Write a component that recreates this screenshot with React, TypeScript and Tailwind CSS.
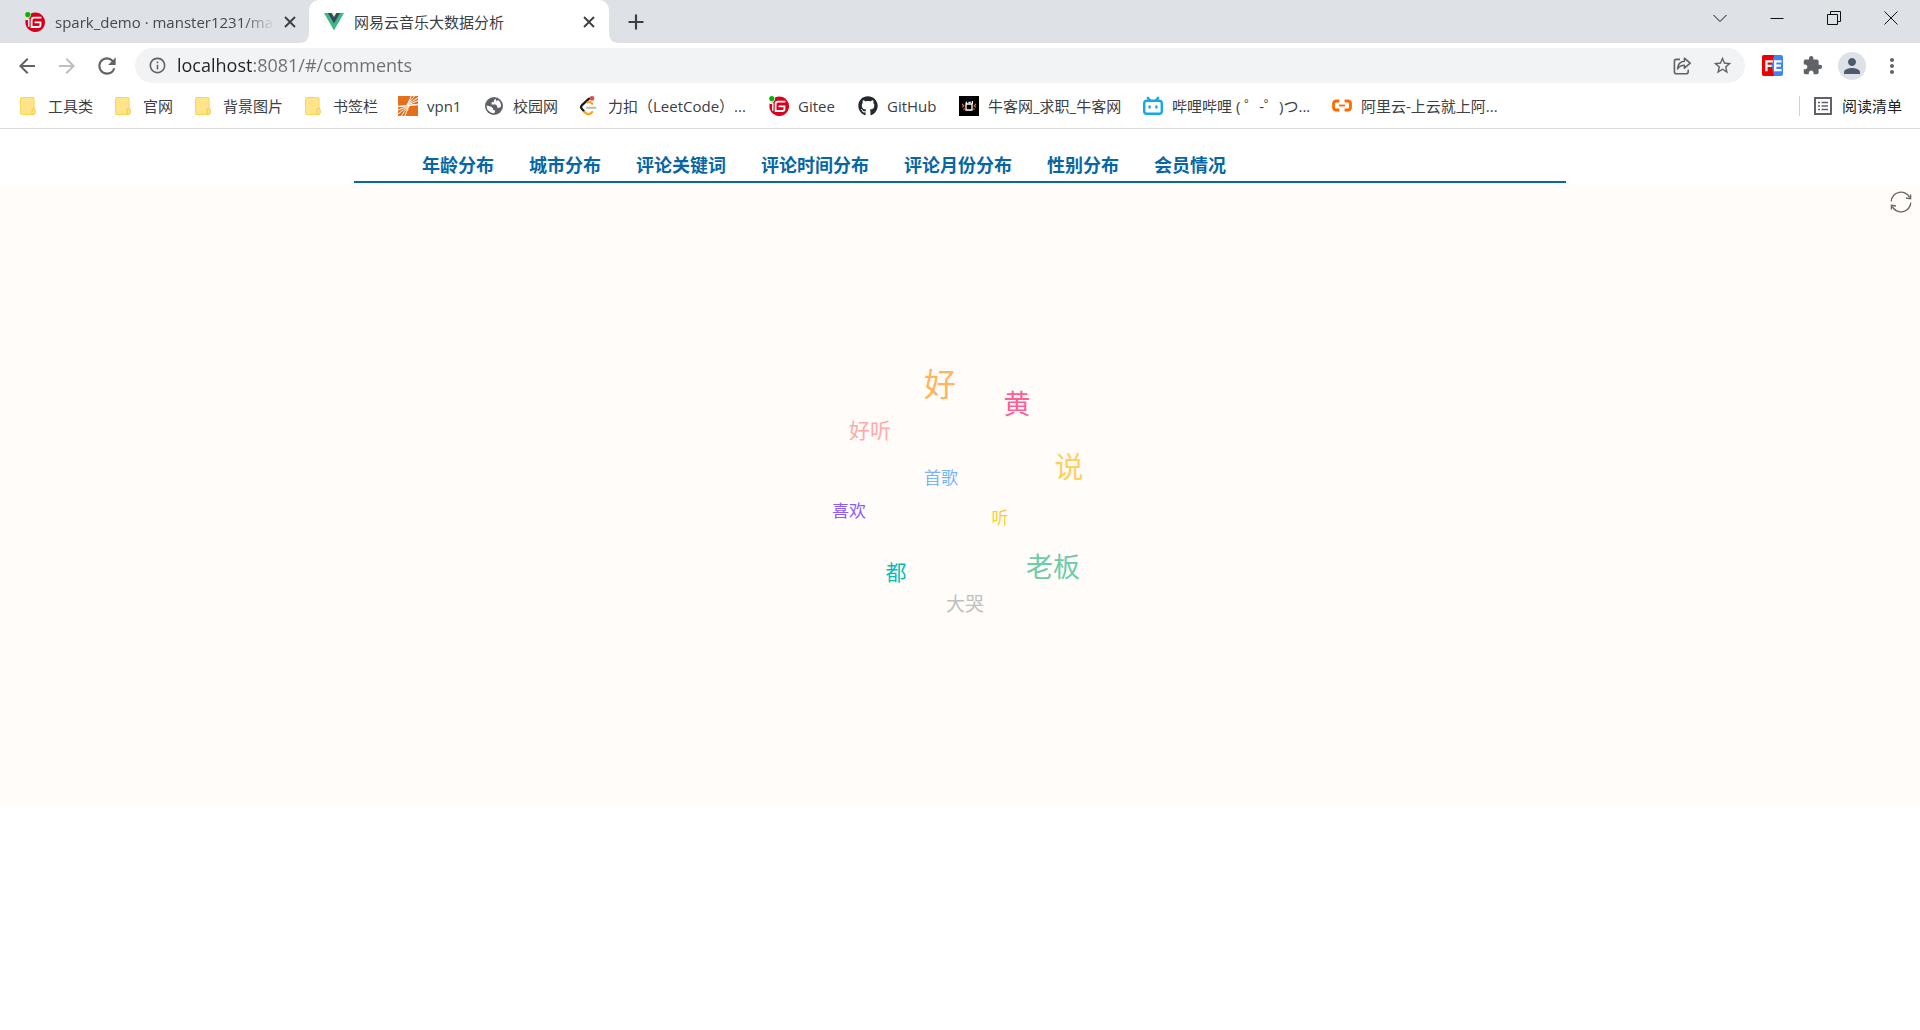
import type { ReactNode } from "react";
import {
  MdArrowBack,
  MdArrowForward,
  MdExtension,
  MdInfoOutline,
  MdMoreVert,
  MdPerson,
  MdRefresh,
  MdStarBorder,
} from "react-icons/md";
import { FaGithub } from "react-icons/fa";

function GiteeIcon() {
  return (
    <svg viewBox="0 0 20 20" className="size-5 shrink-0" aria-hidden="true">
      <path d="M10.2.4a9.8 9.8 0 1 1-9.3 6.7Q6.4 6.4 6.2 1.3A9.8 9.8 0 0 1 10.2.4z" fill="#d9001b" />
      <circle cx="2.8" cy="2.6" r="2.6" fill="#00b800" />
      <path
        d="M16.4 5.6H9Q6.6 5.6 6.6 8v7h6.6q2.3 0 2.3-2.3v-2.4H9.6"
        fill="none"
        stroke="#fff"
        strokeWidth="1.8"
      />
      <path d="M1 7.2h2.8v7.6" fill="none" stroke="#fff" strokeWidth="1.4" />
    </svg>
  );
}

function VueIcon() {
  return (
    <svg viewBox="0 0 20 18" className="h-[18px] w-5 shrink-0" aria-hidden="true">
      <path d="M0 0h20L10 17.4z" fill="#41b883" />
      <path d="M4 0h12l-6 10.4z" fill="#34495e" />
      <path d="M7.6 0h4.8L10 4z" fill="#dff3ea" />
    </svg>
  );
}

function FolderIcon() {
  return (
    <svg viewBox="0 0 20 20" className="size-5 shrink-0" aria-hidden="true">
      <rect x="1.5" y="1.5" width="13.6" height="17" rx="1" fill="#ffe48a" stroke="#fbd750" />
      <path d="M13 18.5v-4.6q0-1.6 1.6-1.6t1.6 1.6v3q0 1.6-1.6 1.6z" fill="#ffe48a" stroke="#ecc94a" />
    </svg>
  );
}

function VpnIcon() {
  return (
    <svg viewBox="0 0 20 20" className="size-5 shrink-0" aria-hidden="true">
      <path d="M0 0h20v20H0z" fill="#e5701c" />
      <g stroke="#fff" fill="none" strokeWidth="1">
        <path d="M0 10.6Q8 9.5 20 8.4" strokeWidth="1.5" />
        <path d="M8.6 8.8Q14 7.6 20 4.6M9 8Q14 6 20 1.6M9.6 7Q13.4 4.4 16.6 0M10.4 5.6Q12 3.6 13.2 0" />
        <path d="M0 14.2Q5 11.6 11.4 10.4M0 18Q5 13.4 11 11M3.4 20Q6 15 10.6 11.8M7 20Q8 16 10.2 13" />
      </g>
    </svg>
  );
}

function GlobeIcon() {
  return (
    <svg viewBox="0 0 20 20" className="size-5 shrink-0" aria-hidden="true">
      <circle cx="10" cy="10" r="9" fill="#5f6368" />
      <path
        d="M11.4 2.8 10 4.2v1.6L7.6 6.6v2h4.2l1.4 1.6v1.6h2.2l1.6-1.2A7.4 7.4 0 0 0 14 4l-1.2 1.4z"
        fill="#fff"
      />
      <path d="M2.6 9.4 6.8 10.6l2.2 1.6v1.6l2.2.6-.8 2.8A7.4 7.4 0 0 1 2.6 9.4z" fill="#fff" />
    </svg>
  );
}

function LeetcodeIcon() {
  return (
    <svg viewBox="0 0 20 20" className="size-5 shrink-0" aria-hidden="true">
      <path d="M10 2.6 2.8 9.4q-1.6 1.7 0 3.4l2.2 2.4" fill="none" stroke="#1a1a1a" strokeWidth="2.2" strokeLinecap="round" />
      <path d="M5.4 15.8 7 17.4q2.4 1.8 4.8 0l1.4-1.4M8.6 6.4q1.8-1.2 3.4.2l1.2 1.2" fill="none" stroke="#ffa116" strokeWidth="2.2" strokeLinecap="round" />
      <path d="M8 11.8h8.4" stroke="#b8b8b8" strokeWidth="2" strokeLinecap="round" />
      <circle cx="13" cy="2.4" r="2.3" fill="#e04a4a" />
    </svg>
  );
}

function NowcoderIcon() {
  return (
    <svg viewBox="0 0 20 20" className="size-5 shrink-0" aria-hidden="true">
      <path d="M0 0h20v20H0z" fill="#000" />
      <path d="M7 8h6v6H7zM7.4 5.8V8M13.4 5v3M9.4 6.4h2.4" fill="none" stroke="#fff" strokeWidth="1.3" />
      <path d="M3 8l2 2-2 1.4M4.2 13.6l2-1.2M17 8l-2 2 2 1.4M15.8 13.6l-2-1.2" fill="none" stroke="#e06a4a" strokeWidth="1.1" />
    </svg>
  );
}

function BilibiliIcon() {
  return (
    <svg viewBox="0 0 20 20" className="size-5 shrink-0" aria-hidden="true">
      <g fill="none" stroke="#13aae2" strokeWidth="2.4" strokeLinecap="round">
        <rect x="1.2" y="4.8" width="17.6" height="13" rx="2.6" />
        <path d="M4.8 1.8 7 4.4M15.2 1.8 13 4.4M6.6 10.4v1M13.4 10.4v1" />
      </g>
    </svg>
  );
}

function AliyunIcon() {
  return (
    <svg viewBox="0 0 20 20" className="size-5 shrink-0" aria-hidden="true">
      <g fill="none" stroke="#ff6a00">
        <path
          d="M7.4 5H4.4Q1.5 5 1.5 7.8v3.4Q1.5 14 4.4 14h3M12.6 5h3q2.9 0 2.9 2.8v3.4q0 2.8-2.9 2.8h-3"
          strokeWidth="2.8"
        />
        <path d="M7 9.5h6" strokeWidth="1.8" />
      </g>
    </svg>
  );
}

function ShareIcon() {
  return (
    <svg viewBox="0 0 20 20" className="size-5" fill="none" stroke="#5f6368" strokeWidth="1.6" strokeLinejoin="round" aria-hidden="true">
      <path d="M8 3.4H4.4Q2.4 3.4 2.4 5.4v10.4q0 2 2 2h9.8q2 0 2-2v-2" />
      <path d="M12.4 2.2 18.2 7.2 12.4 12.2V9.2Q8 9.2 5.6 12.8 6 5.6 12.4 5.2z" />
    </svg>
  );
}

function FeIcon() {
  return (
    <svg viewBox="0 0 20 20" className="size-[21px]" aria-hidden="true">
      <rect width="20" height="20" rx="2" fill="#3f86f4" />
      <path d="M2 0h9.6L9 10l2.6 10H2q-2 0-2-2V2q0-2 2-2z" fill="#ee0000" />
      <path d="M4.2 15.4V6h6M4.2 10.4h5M18.6 6h-6v8.4h6M12.6 10.2h5.4" fill="none" stroke="#fff" strokeWidth="2.2" />
    </svg>
  );
}

function ReadingListIcon() {
  return (
    <svg viewBox="0 0 18 18" className="size-[18px]" fill="none" stroke="#5f6368" aria-hidden="true">
      <path d="M1 1h16v16H1z" strokeWidth="2" />
      <path d="M4 5.5h2M7.5 5.5H14M4 9h2M7.5 9H14M4 12.5h2M7.5 12.5H14" strokeWidth="1.6" />
    </svg>
  );
}

function CloseIcon() {
  return (
    <svg viewBox="0 0 12 12" className="size-3" stroke="#3c4043" strokeWidth="1.9" aria-hidden="true">
      <path d="M1 1l10 10M11 1 1 11" />
    </svg>
  );
}

function ReloadChartIcon() {
  return (
    <svg viewBox="0 0 22 22" className="size-[22px]" fill="none" stroke="#666" strokeWidth="1.3" aria-hidden="true">
      <path d="M1.2 10.4A9.8 9.8 0 0 1 19.8 6.6M20.8 11.6A9.8 9.8 0 0 1 2.2 15.4" />
      <path d="M20.6 3.4v4.4L16 7M1.4 18.6v-4.4L6 15" />
    </svg>
  );
}

const bookmarks: { label: string; icon: ReactNode; width: string }[] = [
  { label: "工具类", icon: <FolderIcon />, width: "w-[73px]" },
  { label: "官网", icon: <FolderIcon />, width: "w-[58px]" },
  { label: "背景图片", icon: <FolderIcon />, width: "w-[88px]" },
  { label: "书签栏", icon: <FolderIcon />, width: "w-[72px]" },
  { label: "vpn1", icon: <VpnIcon />, width: "w-[64px]" },
  { label: "校园网", icon: <GlobeIcon />, width: "w-[73px]" },
  { label: "力扣（LeetCode）...", icon: <LeetcodeIcon />, width: "w-[168px]" },
  { label: "Gitee", icon: <GiteeIcon />, width: "w-[67px]" },
  { label: "GitHub", icon: <FaGithub className="size-5 shrink-0 text-[#24292f]" />, width: "w-[79px]" },
  { label: "牛客网_求职_牛客网", icon: <NowcoderIcon />, width: "w-[162px]" },
  { label: "哔哩哔哩 ( ゜-゜)つ...", icon: <BilibiliIcon />, width: "w-[167px]" },
  { label: "阿里云-上云就上阿...", icon: <AliyunIcon />, width: "w-[170px]" },
];

const sections = [
  "年龄分布",
  "城市分布",
  "评论关键词",
  "评论时间分布",
  "评论月份分布",
  "性别分布",
  "会员情况",
];

// Each word is anchored by its centre on the cloud's canvas.
const words = [
  { text: "好", place: "left-[120px] top-[34px] text-[32px] text-[#ffb55f]" },
  { text: "黄", place: "left-[197px] top-[53px] text-[27px] text-[#ff5f91]" },
  { text: "好听", place: "left-[50px] top-[80px] text-[21px] text-[#ffaaaa]" },
  { text: "说", place: "left-[249px] top-[116px] text-[29px] text-[#ffd05a]" },
  { text: "首歌", place: "left-[121px] top-[127px] text-[17px] text-[#78b4ff]" },
  { text: "喜欢", place: "left-[29px] top-[160px] text-[17px] text-[#8b5cff]" },
  { text: "听", place: "left-[180px] top-[167px] text-[17px] text-[#f7d038]" },
  { text: "都", place: "left-[76px] top-[222px] text-[21px] text-[#07bdb4]" },
  { text: "老板", place: "left-[233px] top-[216px] text-[27px] text-[#6ecba8]" },
  { text: "大哭", place: "left-[145px] top-[254px] text-[19px] text-[#bfbfbf]" },
];

function ToolButton({ label, children }: { label: string; children: ReactNode }) {
  return (
    <button type="button" aria-label={label} className="flex h-9 w-10 shrink-0 items-center justify-center text-[#5f6368]">
      {children}
    </button>
  );
}

function WindowButton({ label, d }: { label: string; d: string }) {
  return (
    <button type="button" aria-label={label} className="flex h-9 w-[57px] items-center justify-center">
      <svg viewBox="0 0 14 14" className="size-3.5" fill="none" stroke="#111" aria-hidden="true">
        <path d={d} />
      </svg>
    </button>
  );
}

function TabStrip() {
  return (
    <header className="flex h-[43px] bg-[#dee1e6]">
      <div className="flex w-[309px] items-center pr-[13px] pl-[25px]">
        <GiteeIcon />
        <a
          href="#/gitee"
          className="ml-2.5 w-[220px] overflow-hidden mask-r-from-85% pt-0.5 text-[15px] whitespace-nowrap text-[#45494d]"
        >
          spark_demo · manster1231/manster
        </a>
        <button type="button" aria-label="关闭标签页" className="ml-[9px] shrink-0">
          <CloseIcon />
        </button>
      </div>
      <div className="relative flex w-[300px] items-center rounded-t-[10px] bg-white pr-[14px] pl-[15px]">
        <svg viewBox="0 0 10 10" className="absolute bottom-0 -left-2.5 size-2.5 fill-white" aria-hidden="true">
          <path d="M10 0v10H0Q10 10 10 0z" />
        </svg>
        <svg viewBox="0 0 10 10" className="absolute -right-2.5 bottom-0 size-2.5 fill-white" aria-hidden="true">
          <path d="M0 0v10h10Q0 10 0 0z" />
        </svg>
        <VueIcon />
        <a href="#/comments" className="ml-2.5 grow pt-0.5 text-[15px] text-[#3c4043]">
          网易云音乐大数据分析
        </a>
        <button type="button" aria-label="关闭标签页">
          <CloseIcon />
        </button>
      </div>
      <button type="button" aria-label="新标签页" className="ml-[7px] flex w-10 items-center justify-center">
        <svg viewBox="0 0 16 16" className="size-4" stroke="#3c4043" strokeWidth="2.2" aria-hidden="true">
          <path d="M8 .5v15M.5 8h15" />
        </svg>
      </button>
      <div className="mr-px ml-auto flex">
        <WindowButton label="搜索标签页" d="M.5 4 7 10.5 13.5 4" />
        <WindowButton label="最小化" d="M.5 7.5h13" />
        <WindowButton label="还原" d="M.5 3.5h10v10H.5zM3.5 3.5v-3h10v10h-3" />
        <WindowButton label="关闭" d="M.5.5l13 13M13.5.5l-13 13" />
      </div>
    </header>
  );
}

function Toolbar() {
  return (
    <div className="flex h-[45px] items-center pr-2 pl-[7px]">
      <ToolButton label="返回">
        <MdArrowBack className="size-6" />
      </ToolButton>
      <ToolButton label="前进">
        <MdArrowForward className="size-6 text-[#bcbec0]" />
      </ToolButton>
      <ToolButton label="重新加载">
        <MdRefresh className="size-[26px]" />
      </ToolButton>
      <div className="mr-[7px] ml-2 flex h-[35px] grow items-center rounded-full bg-[#f1f3f4] pr-[3px] pl-[13px]">
        <MdInfoOutline className="size-[19px] shrink-0 text-[#5f6368]" />
        <input
          type="text"
          aria-label="地址"
          defaultValue="localhost:8081/#/comments"
          className="ml-2.5 min-w-0 grow bg-[linear-gradient(to_right,#202124_76px,#6b6f73_76px)] bg-clip-text text-[18px] text-transparent outline-none"
        />
        <ToolButton label="分享">
          <ShareIcon />
        </ToolButton>
        <ToolButton label="收藏">
          <MdStarBorder className="size-[21px]" />
        </ToolButton>
      </div>
      <ToolButton label="FE 助手">
        <FeIcon />
      </ToolButton>
      <ToolButton label="扩展程序">
        <MdExtension className="size-[21px]" />
      </ToolButton>
      <ToolButton label="用户">
        <span className="flex size-7 items-center justify-center rounded-full bg-[#dee1e6]">
          <MdPerson className="size-6 text-[#4e5a6e]" />
        </span>
      </ToolButton>
      <ToolButton label="菜单">
        <MdMoreVert className="size-6" />
      </ToolButton>
    </div>
  );
}

function BookmarksBar() {
  return (
    <nav
      aria-label="书签"
      className="flex h-[41px] items-center border-b border-[#dadce0] pr-[18px] pb-1 pl-[19px] text-[15px] text-[#3c4043]"
    >
      <div className="flex gap-[22px] overflow-hidden">
        {bookmarks.map((b) => (
          <a key={b.label} href="#/bookmark" className={`flex shrink-0 items-center gap-[9px] whitespace-nowrap ${b.width}`}>
            {b.icon}
            {b.label}
          </a>
        ))}
      </div>
      <button type="button" className="ml-auto flex shrink-0 items-center gap-2.5">
        <span className="mr-1 h-5 w-px bg-[#cfd1d4]" />
        <ReadingListIcon />
        <span className="text-[#202124]">阅读清单</span>
      </button>
    </nav>
  );
}

export default function App() {
  return (
    <div className="min-h-screen bg-white font-['Open_Sans','Noto_Sans_CJK_SC',sans-serif]">
      <TabStrip />
      <Toolbar />
      <BookmarksBar />
      <nav
        aria-label="图表"
        className="mx-auto flex max-w-[1212px] gap-[35px] border-b-2 border-[#0767a5] pt-[23px] pb-0.5 pl-[68px] text-[18px] leading-[27px] font-bold text-[#0767a5]"
      >
        {sections.map((s) => (
          <a key={s} href="#/comments">
            {s}
          </a>
        ))}
      </nav>
      <main className="relative h-[625px] bg-[#fffcf9] pt-[167px]">
        <button type="button" aria-label="刷新" className="absolute top-2 right-2">
          <ReloadChartIcon />
        </button>
        <div className="relative mx-auto size-[280px]">
          {words.map((w) => (
            <span
              key={w.text}
              className={`absolute -translate-x-1/2 -translate-y-1/2 leading-none whitespace-nowrap ${w.place}`}
            >
              {w.text}
            </span>
          ))}
        </div>
      </main>
    </div>
  );
}
